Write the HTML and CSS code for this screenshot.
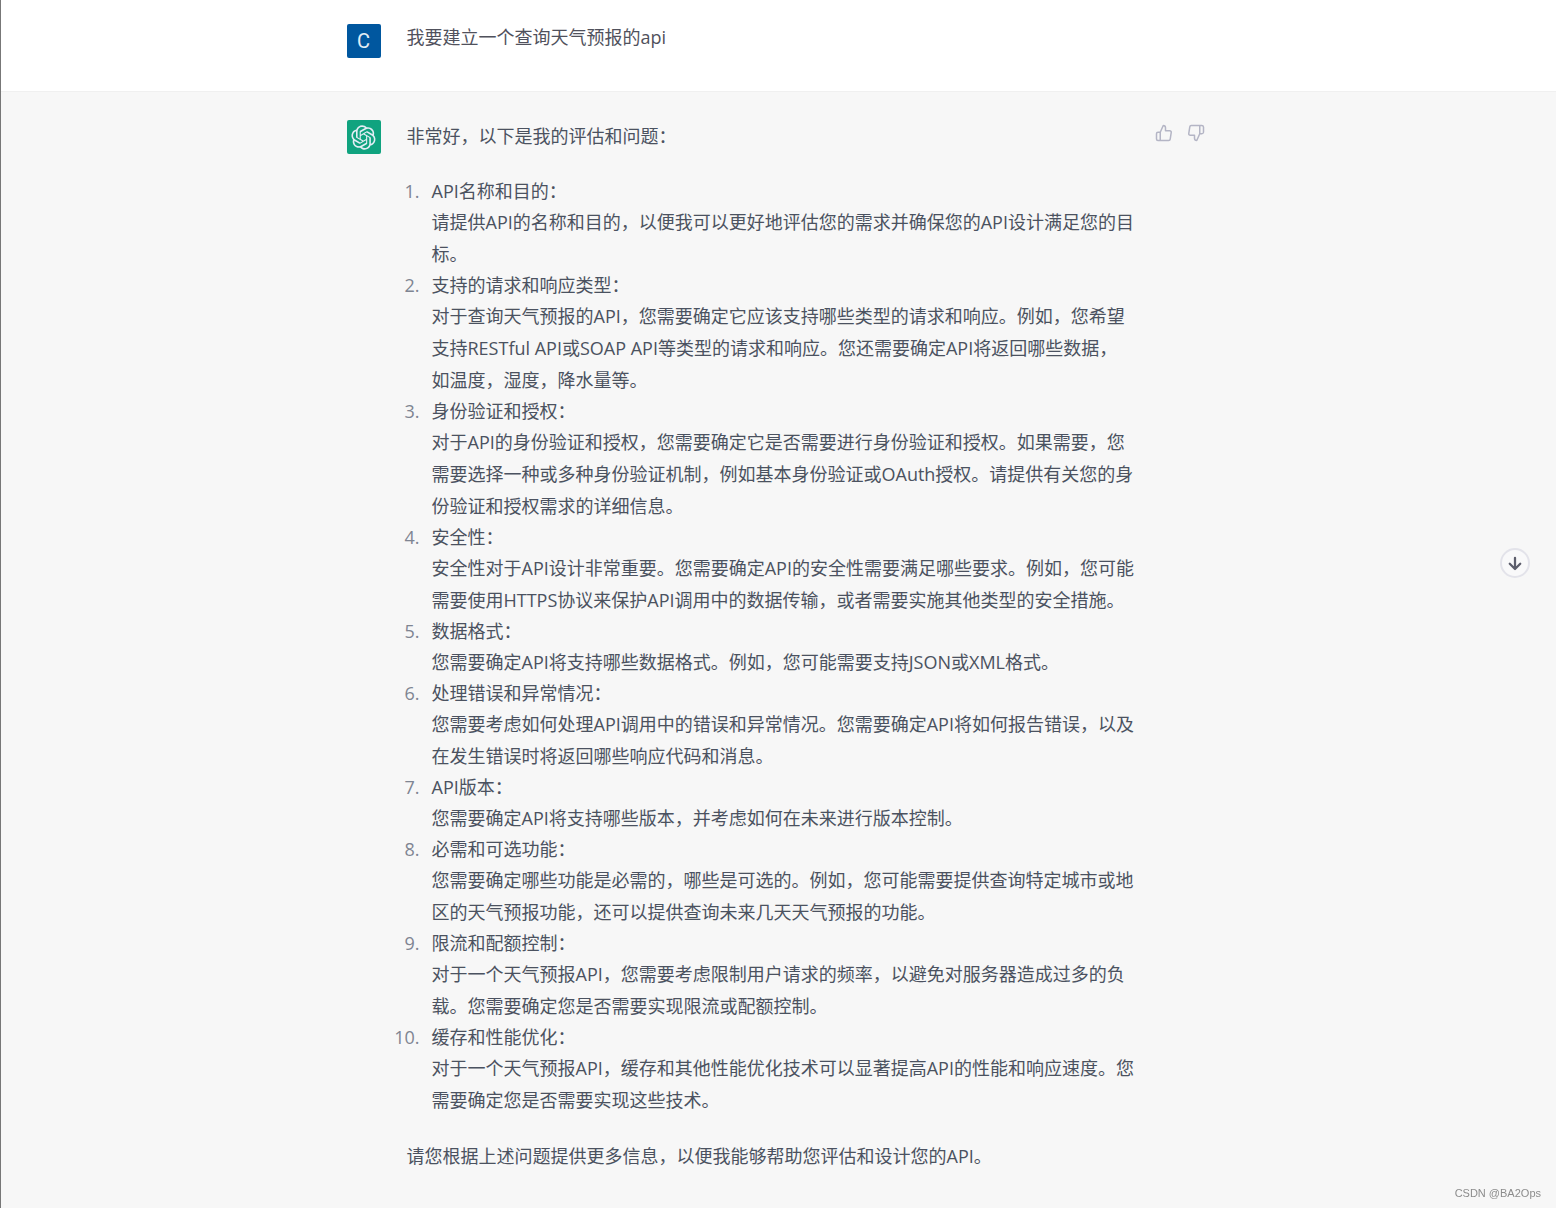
FILE: index.html
```html
<!DOCTYPE html>
<html lang="zh-CN">
<head>
    <meta charset="UTF-8">
    <title>查询天气预报的api</title>
    <link rel="stylesheet" href="styles.css">
</head>
<body>
<main class="chat">
    <section class="message user">
        <div class="inner">
            <div class="avatar">C</div>
            <div class="content">
                <p>我要建立一个查询天气预报的api</p>
            </div>
        </div>
    </section>
    <section class="message bot">
        <div class="inner">
            <div class="avatar">
                <svg width="25" height="25" viewBox="0 0 41 41" fill="currentColor"><path d="M37.5324 16.8707C37.9808 15.5241 38.1363 14.0974 37.9886 12.6859C37.8409 11.2744 37.3934 9.91076 36.676 8.68622C35.6126 6.83404 33.9882 5.3676 32.0373 4.4985C30.0864 3.62941 27.9098 3.40259 25.8215 3.85078C24.8796 2.7893 23.7219 1.94125 22.4257 1.36341C21.1295 0.785575 19.7249 0.491269 18.3058 0.500197C16.1708 0.495044 14.0893 1.16803 12.3614 2.42214C10.6335 3.67624 9.34853 5.44666 8.6917 7.47815C7.30085 7.76286 5.98686 8.3414 4.8377 9.17505C3.68854 10.0087 2.73073 11.0782 2.02839 12.312C0.956464 14.1591 0.498905 16.2988 0.721698 18.4228C0.944492 20.5467 1.83612 22.5449 3.268 24.1293C2.81966 25.4759 2.66413 26.9026 2.81182 28.3141C2.95951 29.7256 3.40701 31.0892 4.12437 32.3138C5.18791 34.1659 6.8123 35.6322 8.76321 36.5013C10.7141 37.3704 12.8907 37.5973 14.9789 37.1492C15.9208 38.2107 17.0786 39.0587 18.3747 39.6366C19.6709 40.2144 21.0755 40.5087 22.4946 40.4998C24.6307 40.5054 26.7133 39.8321 28.4418 38.5772C30.1704 37.3223 31.4556 35.5506 32.1119 33.5179C33.5027 33.2332 34.8167 32.6547 35.9659 31.821C37.115 30.9874 38.0728 29.9178 38.7752 28.684C39.8458 26.8371 40.3023 24.6979 40.0789 22.5748C39.8556 20.4517 38.9639 18.4544 37.5324 16.8707ZM22.4978 37.8849C20.7443 37.8874 19.0459 37.2733 17.6994 36.1501C17.7601 36.117 17.8666 36.0586 17.936 36.0161L25.9004 31.4156C26.1003 31.3019 26.2663 31.137 26.3813 30.9378C26.4964 30.7386 26.5563 30.5124 26.5549 30.2825V19.0542L29.9213 20.998C29.9389 21.0068 29.9541 21.0198 29.9656 21.0359C29.977 21.052 29.9842 21.0707 29.9867 21.0902V30.3889C29.9842 32.375 29.1946 34.2791 27.7909 35.6841C26.3872 37.0892 24.4838 37.8806 22.4978 37.8849ZM6.39227 31.0064C5.51397 29.4888 5.19742 27.7107 5.49804 25.9832C5.55718 26.0187 5.66048 26.0818 5.73461 26.1244L13.699 30.7248C13.8975 30.8408 14.1233 30.902 14.3532 30.902C14.583 30.902 14.8088 30.8408 15.0073 30.7248L24.731 25.1103V28.9979C24.7321 29.0177 24.7283 29.0376 24.7199 29.0556C24.7115 29.0736 24.6988 29.0893 24.6829 29.1012L16.6317 33.7497C14.9096 34.7416 12.8643 35.0097 10.9447 34.4954C9.02506 33.9811 7.38785 32.7263 6.39227 31.0064ZM4.29707 13.6194C5.17156 12.0998 6.55279 10.9364 8.19885 10.3327C8.19885 10.4013 8.19491 10.5228 8.19491 10.6071V19.808C8.19351 20.0378 8.25334 20.2638 8.36823 20.4629C8.48312 20.6619 8.64893 20.8267 8.84863 20.9404L18.5723 26.5542L15.206 28.4979C15.1894 28.5089 15.1703 28.5155 15.1505 28.5173C15.1307 28.5191 15.1107 28.516 15.0924 28.5082L7.04046 23.8557C5.32135 22.8601 4.06716 21.2235 3.55289 19.3046C3.03862 17.3858 3.30624 15.3413 4.29707 13.6194ZM31.955 20.0556L22.2312 14.4411L25.5976 12.4981C25.6142 12.4872 25.6333 12.4805 25.6531 12.4787C25.6729 12.4769 25.6928 12.4801 25.7111 12.4879L33.7631 17.1364C34.9967 17.849 36.0017 18.8982 36.6606 20.1613C37.3194 21.4244 37.6047 22.849 37.4832 24.2684C37.3617 25.6878 36.8382 27.0432 35.9743 28.1759C35.1103 29.3086 33.9415 30.1717 32.6047 30.6641C32.6047 30.5947 32.6047 30.4733 32.6047 30.3889V21.188C32.6066 20.9586 32.5474 20.7328 32.4332 20.5338C32.319 20.3348 32.154 20.1698 31.955 20.0556ZM35.3055 15.0128C35.2464 14.9765 35.1431 14.9142 35.069 14.8717L27.1045 10.2712C26.906 10.1554 26.6803 10.0943 26.4504 10.0943C26.2206 10.0943 25.9948 10.1554 25.7963 10.2712L16.0726 15.8858V11.9982C16.0715 11.9783 16.0753 11.9585 16.0837 11.9405C16.0921 11.9225 16.1048 11.9068 16.1207 11.8949L24.1719 7.25025C25.4053 6.53903 26.8158 6.19376 28.2383 6.25482C29.6608 6.31589 31.0364 6.78077 32.2044 7.59508C33.3723 8.40939 34.2842 9.53945 34.8334 10.8531C35.3826 12.1667 35.5464 13.6095 35.3055 15.0128ZM14.2424 21.9419L10.8752 19.9981C10.8576 19.9893 10.8423 19.9763 10.8309 19.9602C10.8195 19.9441 10.8122 19.9254 10.8098 19.9058V10.6071C10.8107 9.18295 11.2173 7.78848 11.9819 6.58696C12.7466 5.38544 13.8377 4.42659 15.1275 3.82264C16.4173 3.21869 17.8524 2.99464 19.2649 3.1767C20.6775 3.35876 22.0089 3.93941 23.1034 4.85067C23.0427 4.88379 22.937 4.94215 22.8668 4.98473L14.9024 9.58517C14.7025 9.69878 14.5366 9.86356 14.4215 10.0626C14.3065 10.2616 14.2466 10.4877 14.2479 10.7175L14.2424 21.9419ZM16.071 17.9991L20.4018 15.4978L24.7325 17.9975V22.9985L20.4018 25.4983L16.071 22.9985V17.9991Z"/></svg>
            </div>
            <div class="content">
                <p>非常好，以下是我的评估和问题：</p>
                <ol>
                    <li><div>
                        <p>API名称和目的：</p>
                        <p>请提供API的名称和目的，以便我可以更好地评估您的需求并确保您的API设计满足您的目标。</p>
                    </div></li>
                    <li><div>
                        <p>支持的请求和响应类型：</p>
                        <p>对于查询天气预报的API，您需要确定它应该支持哪些类型的请求和响应。例如，您希望支持RESTful API或SOAP API等类型的请求和响应。您还需要确定API将返回哪些数据，<br>如温度，湿度，降水量等。</p>
                    </div></li>
                    <li><div>
                        <p>身份验证和授权：</p>
                        <p>对于API的身份验证和授权，您需要确定它是否需要进行身份验证和授权。如果需要，您需要选择一种或多种身份验证机制，例如基本身份验证或OAuth授权。请提供有关您的身份验证和授权需求的详细信息。</p>
                    </div></li>
                    <li><div>
                        <p>安全性：</p>
                        <p>安全性对于API设计非常重要。您需要确定API的安全性需要满足哪些要求。例如，您可能需要使用HTTPS协议来保护API调用中的数据传输，或者需要实施其他类型的安全措施。</p>
                    </div></li>
                    <li><div>
                        <p>数据格式：</p>
                        <p>您需要确定API将支持哪些数据格式。例如，您可能需要支持JSON或XML格式。</p>
                    </div></li>
                    <li><div>
                        <p>处理错误和异常情况：</p>
                        <p>您需要考虑如何处理API调用中的错误和异常情况。您需要确定API将如何报告错误，以及在发生错误时将返回哪些响应代码和消息。</p>
                    </div></li>
                    <li><div>
                        <p>API版本：</p>
                        <p>您需要确定API将支持哪些版本，并考虑如何在未来进行版本控制。</p>
                    </div></li>
                    <li><div>
                        <p>必需和可选功能：</p>
                        <p>您需要确定哪些功能是必需的，哪些是可选的。例如，您可能需要提供查询特定城市或地区的天气预报功能，还可以提供查询未来几天天气预报的功能。</p>
                    </div></li>
                    <li><div>
                        <p>限流和配额控制：</p>
                        <p>对于一个天气预报API，您需要考虑限制用户请求的频率，以避免对服务器造成过多的负载。您需要确定您是否需要实现限流或配额控制。</p>
                    </div></li>
                    <li><div>
                        <p>缓存和性能优化：</p>
                        <p>对于一个天气预报API，缓存和其他性能优化技术可以显著提高API的性能和响应速度。您需要确定您是否需要实现这些技术。</p>
                    </div></li>
                </ol>
                <p>请您根据上述问题提供更多信息，以便我能够帮助您评估和设计您的API。</p>
            </div>
            <div class="actions">
                <button type="button" aria-label="赞">
                    <svg width="18" height="18" viewBox="0 0 24 24"><path d="M14 9V5a3 3 0 0 0-3-3l-4 9v11h11.28a2 2 0 0 0 2-1.7l1.38-9a2 2 0 0 0-2-2.3zM7 22H4a2 2 0 0 1-2-2v-7a2 2 0 0 1 2-2h3"/></svg>
                </button>
                <button type="button" aria-label="踩">
                    <svg width="18" height="18" viewBox="0 0 24 24"><path d="M10 15v4a3 3 0 0 0 3 3l4-9V2H5.72a2 2 0 0 0-2 1.7l-1.38 9a2 2 0 0 0 2 2.3zm7-13h2.67A2.31 2.31 0 0 1 22 4v7a2.31 2.31 0 0 1-2.33 2H17"/></svg>
                </button>
            </div>
        </div>
    </section>
</main>
<button type="button" class="to-bottom" aria-label="滚动到底部">
    <svg width="18" height="18" viewBox="0 0 24 24"><path d="M12 5v15M19 13l-7 7-7-7"/></svg>
</button>
<div class="watermark">CSDN @BA2Ops</div>
</body>
</html>
```
FILE: styles.css
```css
*{
    margin: 0;
    padding: 0;
    box-sizing: border-box;
}
body{
    font-family: "Open Sans", "Noto Sans CJK SC", sans-serif;
    font-size: 18px;
    line-height: 32px;
    color: #4b5260;
    background: #fff;
}
.chat{
    display: flex;
    flex-direction: column;
    min-height: 100vh;
    border-left: 1px solid #777;
}
.message{
    padding: 0 24px;
}
.inner{
    display: flex;
    align-items: flex-start;
    max-width: 864px;
    margin: 0 auto;
}
.user{
    padding-top: 21px;
    padding-bottom: 33px;
    color: #50515c;
}
.user .avatar{
    margin-top: 3px;
    background: #00579f;
}
.bot{
    flex: 1;
    padding-top: 28px;
    padding-bottom: 32px;
    background: #f7f7f7;
    border-top: 1px solid #f0f0f0;
}
.avatar{
    display: flex;
    align-items: center;
    justify-content: center;
    flex-shrink: 0;
    width: 34px;
    height: 34px;
    margin-right: 26px;
    border-radius: 2px;
    font-family: Roboto, sans-serif;
    font-size: 20px;
    color: #e3edf5;
    background: #10a37f;
}
.content{
    flex: 1;
    max-width: 734px;
}
/* 序号右对齐, 挂在正文左侧 */
ol{
    margin: 24px 0 24px -18px;
    list-style: none;
    counter-reset: item;
}
li{
    display: grid;
    grid-template-columns: 31px 1fr;
    column-gap: 12px;
    line-height: 30px;
    counter-increment: item;
}
li::before{
    content: counter(item) ".";
    text-align: right;
    color: #7f8592;
}
li p + p{
    line-height: 32px;
}
button{
    display: flex;
    align-items: center;
    justify-content: center;
    border: none;
    color: inherit;
    background: none;
    cursor: pointer;
}
button svg{
    fill: none;
    stroke: currentColor;
    stroke-width: 2;
    stroke-linecap: round;
    stroke-linejoin: round;
}
.actions{
    display: flex;
    gap: 14px;
    margin-left: 14px;
    padding-top: 4px;
    color: #b4b5c5;
}
.to-bottom{
    position: fixed;
    top: 548px;
    right: 26px;
    width: 30px;
    height: 30px;
    border: 2px solid #e3e3ea;
    border-radius: 50%;
    color: #5c5d6b;
    background: #f9f9fa;
}
.to-bottom svg{
    stroke-width: 3;
}
.watermark{
    position: fixed;
    right: 15px;
    bottom: 6px;
    font-family: "Liberation Sans", sans-serif;
    font-size: 11px;
    line-height: 18px;
    color: #8c8c8c;
}
```
